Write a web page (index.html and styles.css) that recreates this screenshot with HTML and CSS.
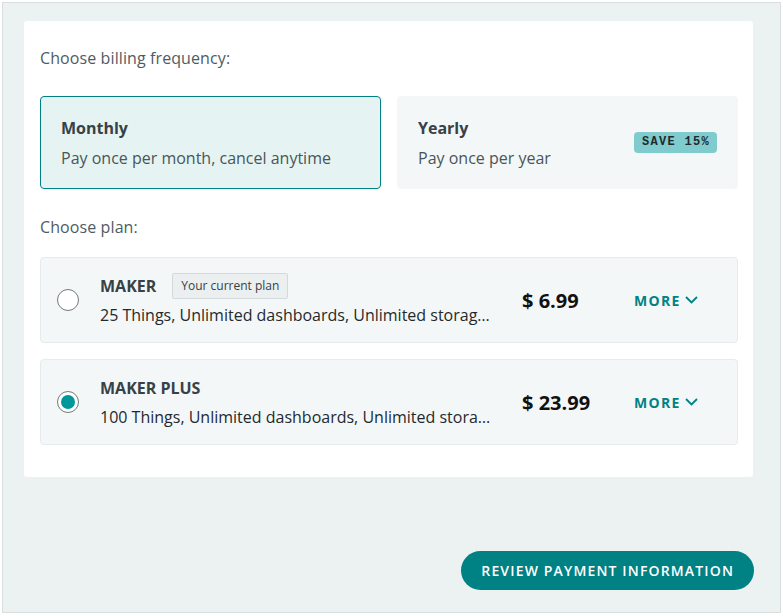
FILE: index.html
```html
<!DOCTYPE html>
<html>
<head>
<meta charset="utf-8">
<link rel="stylesheet" href="styles.css">
</head>
<body>
<div class="panel">
  <div class="card">
    <div class="label">Choose billing frequency:</div>
    <div class="freqs">
      <div class="freq active">
        <div class="freq-text">
          <div class="freq-title">Monthly</div>
          <div class="freq-desc">Pay once per month, cancel anytime</div>
        </div>
      </div>
      <div class="freq">
        <div class="freq-text">
          <div class="freq-title">Yearly</div>
          <div class="freq-desc">Pay once per year</div>
        </div>
        <span class="save">SAVE 15%</span>
      </div>
    </div>
    <div class="label plan-label">Choose plan:</div>
    <div class="plans">
      <div class="plan">
        <span class="radio"></span>
        <div class="plan-info">
          <div class="plan-head"><span class="plan-name">MAKER</span><span class="current">Your current plan</span></div>
          <div class="plan-desc">25 Things, Unlimited dashboards, Unlimited storage, Unlimited data retention</div>
        </div>
        <div class="price">$ 6.99</div>
        <div class="more"><span>MORE</span><svg width="13" height="8" viewBox="0 0 13 8"><path d="M1 1l5.5 5.5L12 1" fill="none" stroke="#008184" stroke-width="1.8"/></svg></div>
      </div>
      <div class="plan">
        <span class="radio checked"></span>
        <div class="plan-info">
          <div class="plan-head"><span class="plan-name">MAKER PLUS</span></div>
          <div class="plan-desc">100 Things, Unlimited dashboards, Unlimited storage, Unlimited data retention</div>
        </div>
        <div class="price">$ 23.99</div>
        <div class="more"><span>MORE</span><svg width="13" height="8" viewBox="0 0 13 8"><path d="M1 1l5.5 5.5L12 1" fill="none" stroke="#008184" stroke-width="1.8"/></svg></div>
      </div>
    </div>
  </div>
  <div class="actions">
    <button class="review">REVIEW PAYMENT INFORMATION</button>
  </div>
</div>
</body>
</html>
```

FILE: styles.css
```css
html, body {
  margin: 0;
  padding: 0;
  background: #ffffff;
}
body {
  padding: 2px;
  font-family: "Open Sans", "Liberation Sans", sans-serif;
  color: #374146;
}
.panel {
  box-sizing: border-box;
  width: 779px;
  height: 611px;
  border: 1px solid #d9dede;
  background: #ecf1f1;
  padding: 18px 27px 0 21px;
  display: flex;
  flex-direction: column;
}
.card {
  background: #ffffff;
  border-radius: 3px;
  padding: 25px 15px 32px 16px;
}
.label {
  font-size: 16px;
  line-height: 24px;
  letter-spacing: 0.1px;
  color: #4f5b62;
}
.freqs {
  display: flex;
  gap: 16px;
  margin-top: 26px;
}
.freq {
  flex: 1;
  display: flex;
  align-items: center;
  justify-content: space-between;
  box-sizing: border-box;
  height: 93px;
  padding: 0 20px;
  border: 1px solid #f4f7f7;
  border-radius: 4px;
  background: #f4f7f7;
}
.freq.active {
  background: #e5f4f2;
  border-color: #008184;
}
.freq-text {
  padding-top: 1px;
}
.freq-title {
  font-size: 16px;
  font-weight: 700;
  line-height: 24px;
  color: #374146;
  margin-bottom: 6px;
}
.freq-desc {
  font-size: 16px;
  line-height: 24px;
  color: #4a555a;
}
.save {
  display: inline-block;
  background: #7fcbcd;
  color: #1f2a2e;
  border-radius: 4px;
  font-family: "Liberation Mono", "DejaVu Sans Mono", monospace;
  font-weight: 700;
  font-size: 12px;
  letter-spacing: 1.3px;
  line-height: 21px;
  padding: 0 7px 0 8px;
}
.plan-label {
  margin-top: 26px;
}
.plans {
  display: flex;
  flex-direction: column;
  gap: 16px;
  margin-top: 18px;
}
.plan {
  display: flex;
  align-items: center;
  box-sizing: border-box;
  height: 86px;
  padding: 0 39px 0 16px;
  background: #f4f7f7;
  border: 1px solid #e6ebeb;
  border-radius: 4px;
}
.radio {
  box-sizing: border-box;
  flex: none;
  width: 22px;
  height: 22px;
  border-radius: 50%;
  border: 1px solid #6f7a7d;
  background: #ffffff;
  margin-right: 21px;
  position: relative;
}
.radio.checked::after {
  content: "";
  position: absolute;
  left: 3px;
  top: 3px;
  width: 14px;
  height: 14px;
  border-radius: 50%;
  background: #00979a;
}
.plan-info {
  flex: 1;
  min-width: 0;
  margin-right: 30px;
}
.plan-head {
  display: flex;
  align-items: center;
  height: 26px;
  margin-bottom: 4px;
}
.plan-name {
  font-size: 16px;
  font-weight: 700;
  color: #374146;
}
.current {
  margin-left: 16px;
  box-sizing: border-box;
  height: 26px;
  line-height: 24px;
  padding: 0 8px;
  font-size: 12px;
  color: #374146;
  background: #ebefef;
  border: 1px solid #d3dadb;
  border-radius: 2px;
}
.plan-desc {
  font-size: 16px;
  line-height: 24px;
  color: #1f2a2e;
  white-space: nowrap;
  overflow: hidden;
  text-overflow: ellipsis;
}
.price {
  flex: none;
  width: 112px;
  font-size: 20px;
  font-weight: 700;
  color: #111;
}
.more {
  flex: none;
  width: 64px;
  display: flex;
  align-items: center;
  justify-content: space-between;
  font-size: 14px;
  font-weight: 700;
  letter-spacing: 1.3px;
  color: #008184;
}
.more svg {
  display: block;
  flex: none;
}
.actions {
  margin-top: auto;
  margin-bottom: 22px;
  margin-right: -1px;
  display: flex;
  justify-content: flex-end;
}
.review {
  height: 39px;
  padding: 0 20px;
  border: none;
  border-radius: 20px;
  background: #008184;
  color: #ffffff;
  font-family: "Open Sans", "Liberation Sans", sans-serif;
  font-size: 14px;
  font-weight: 600;
  letter-spacing: 1.15px;
}
```
